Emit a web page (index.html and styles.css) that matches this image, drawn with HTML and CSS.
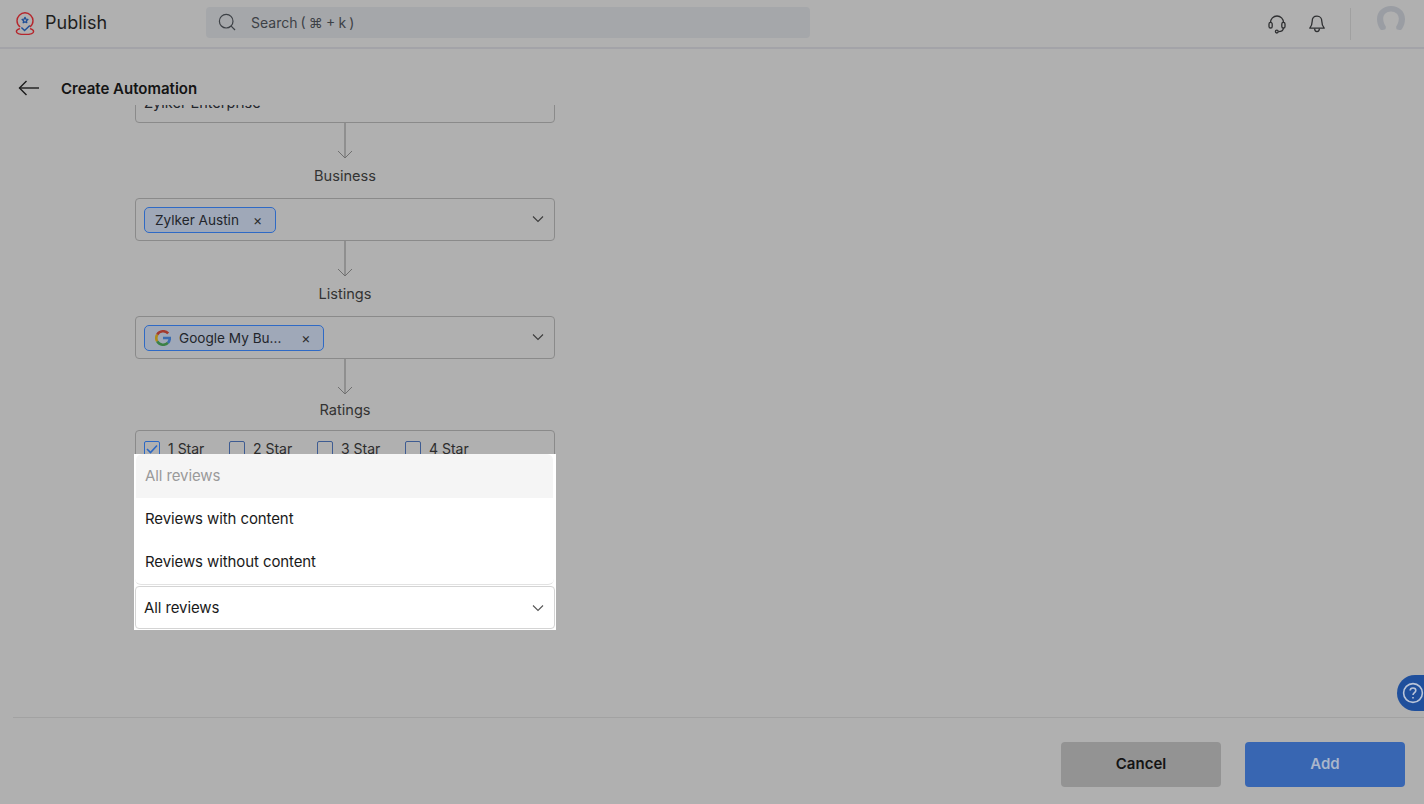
FILE: index.html
```html
<!DOCTYPE html>
<html lang="en">
<head>
  <meta charset="UTF-8">
  <meta name="viewport" content="width=device-width, initial-scale=1.0">
  <title>Create Automation</title>
  <link rel="stylesheet" href="styles.css">
</head>
<body>
  <div class="topbar">
    <div class="brand">
      <svg class="brand-logo" width="22" height="26" viewBox="0 0 22 26" fill="none">
        <path d="M6.2 17C4.2 15.6 3 13.4 3 10.8C3 6.4 6.6 2.8 11 2.8C15.4 2.8 19 6.4 19 10.8C19 13.4 17.8 15.6 15.8 17" stroke="#b5262c" stroke-width="1.4"/>
        <path d="M6 18.6C3.6 19.2 2.4 20.2 2.4 21.4C2.4 23.4 6.4 24.4 11 24.4C15.6 24.4 19.6 23.4 19.6 21.4C19.6 20.2 18.4 19.2 16 18.6" stroke="#b5262c" stroke-width="1.4"/>
        <path d="M11 7.4L11.9 9.2L13.9 9.4L12.4 10.8L12.8 12.7L11 11.8L9.2 12.7L9.6 10.8L8.1 9.4L10.1 9.2Z" stroke="#1f4f96" stroke-width="1.3" stroke-linejoin="round"/>
        <path d="M7.4 17.4L10.6 20.6L15.8 15.6" stroke="#1f4f96" stroke-width="1.4"/>
      </svg>
      <span class="brand-name">Publish</span>
    </div>
    <div class="search">
      <svg width="20" height="20" viewBox="0 0 20 20" fill="none" stroke="#3d4146" stroke-width="1.2">
        <circle cx="9.2" cy="9.2" r="6.8"/>
        <path d="M14.2 14.2L18 18"/>
      </svg>
      <span class="search-text">Search ( ⌘ + k )</span>
    </div>
    <div class="top-icons">
      <svg width="20" height="20" viewBox="0 0 20 20" fill="none" stroke="#2f3032" stroke-width="1.3">
        <path d="M3.5 9V8.5C3.5 4.9 6.4 2 10 2C13.6 2 16.5 4.9 16.5 8.5V9"/>
        <rect x="2" y="8.4" width="3.2" height="5.6" rx="1.6"/>
        <rect x="14.8" y="8.4" width="3.2" height="5.6" rx="1.6"/>
        <path d="M16.4 14C16.4 16.4 14.6 17.6 11.4 17.6"/>
        <circle cx="9.8" cy="17.6" r="1.4"/>
      </svg>
      <svg class="bell" width="20" height="20" viewBox="0 0 20 20" fill="none" stroke="#2f3032" stroke-width="1.3">
        <path d="M10 2.2C7 2.2 5.2 4.4 5.2 7.2C5.2 11 4.2 12.4 2.8 14.2H17.2C15.8 12.4 14.8 11 14.8 7.2C14.8 4.4 13 2.2 10 2.2Z" stroke-linejoin="round"/>
        <path d="M7.6 14.6C7.6 16.4 8.6 17.6 10 17.6C11.4 17.6 12.4 16.4 12.4 14.6"/>
      </svg>
      <div class="top-divider"></div>
      <svg class="avatar" width="30" height="30" viewBox="0 0 30 30" fill="#9a9da3">
        <path d="M15 1C7 1 1 6.5 1 14C1 18 2.3 21.6 4.4 24.4C5.4 25.2 7.6 25.2 9.4 24.2C9.8 23.2 10 22.2 9.8 21.4C8.2 19.4 7.2 16.6 7.2 13.8C7.2 9.6 10.4 6.6 15 6.6C19.6 6.6 22.8 9.6 22.8 13.8C22.8 16.6 21.8 19.4 20.2 21.4C20 22.2 20.2 23.2 20.6 24.2C22.4 25.2 24.6 25.2 25.6 24.4C27.7 21.6 29 18 29 14C29 6.5 23 1 15 1Z"/>
      </svg>
    </div>
  </div>

  <div class="page-head">
    <svg width="22" height="16" viewBox="0 0 22 16" fill="none" stroke="#1c1c1c" stroke-width="1.4">
      <path d="M1.5 8H21"/>
      <path d="M8.5 1L1.5 8L8.5 15"/>
    </svg>
    <span class="page-title">Create Automation</span>
  </div>

  <div class="main">
    <div class="flow">
      <div class="box box-first"><span class="box-text">Zylker Enterprise</span></div>

      <div class="connector connector-a">
        <svg width="16" height="36" viewBox="0 0 16 36" fill="none" stroke="#6f6f6f">
          <path d="M8 0V35"/>
          <path d="M1 28L8 35L15 28"/>
        </svg>
        <div class="step-label">Business</div>
      </div>
      <div class="box">
        <div class="chip">
          <span class="chip-text">Zylker Austin</span>
          <span class="chip-close">×</span>
        </div>
        <svg class="chevron" width="12" height="8" viewBox="0 0 12 8" fill="none" stroke="#3b3b3b" stroke-width="1.1"><path d="M1 1.5L6 6.5L11 1.5"/></svg>
      </div>

      <div class="connector connector-a">
        <svg width="16" height="36" viewBox="0 0 16 36" fill="none" stroke="#6f6f6f">
          <path d="M8 0V35"/>
          <path d="M1 28L8 35L15 28"/>
        </svg>
        <div class="step-label">Listings</div>
      </div>
      <div class="box">
        <div class="chip chip-google">
          <svg class="g-logo" width="16" height="16" viewBox="0 0 16 16" fill="none" stroke-width="2.6">
            <path d="M13.2 3.4A7 7 0 0 0 2.2 4.6" stroke="#a33a2e"/>
            <path d="M2.2 4.6A7 7 0 0 0 2.2 11.4" stroke="#b08a1a"/>
            <path d="M2.2 11.4A7 7 0 0 0 13 12.8" stroke="#3b8146"/>
            <path d="M13 12.8A7 7 0 0 0 14.8 8H8" stroke="#3b6cb0"/>
          </svg>
          <span class="chip-text">Google My Bu...</span>
          <span class="chip-close">×</span>
        </div>
        <svg class="chevron" width="12" height="8" viewBox="0 0 12 8" fill="none" stroke="#3b3b3b" stroke-width="1.1"><path d="M1 1.5L6 6.5L11 1.5"/></svg>
      </div>

      <div class="connector connector-b">
        <svg width="16" height="36" viewBox="0 0 16 36" fill="none" stroke="#6f6f6f">
          <path d="M8 0V35"/>
          <path d="M1 28L8 35L15 28"/>
        </svg>
        <div class="step-label">Ratings</div>
      </div>
      <div class="box box-ratings">
        <div class="rating"><span class="check checked"><svg width="12" height="10" viewBox="0 0 12 10" fill="none" stroke="#2c68c4" stroke-width="1.6"><path d="M1 5L4.5 8.5L11 1.5"/></svg></span>1 Star</div>
        <div class="rating"><span class="check"></span>2 Star</div>
        <div class="rating"><span class="check"></span>3 Star</div>
        <div class="rating"><span class="check"></span>4 Star</div>
      </div>

      <div class="dropdown">
        <div class="menu">
          <div class="menu-item menu-item-active">All reviews</div>
          <div class="menu-item">Reviews with content</div>
          <div class="menu-item">Reviews without content</div>
        </div>
        <div class="select">
          <span class="select-text">All reviews</span>
          <svg width="12" height="8" viewBox="0 0 12 8" fill="none" stroke="#555" stroke-width="1.1"><path d="M1 1.5L6 6.5L11 1.5"/></svg>
        </div>
      </div>
    </div>

    <div class="help">
      <svg width="22" height="22" viewBox="0 0 22 22" fill="none" stroke="#b9c4d8" stroke-width="1.6">
        <circle cx="11" cy="11" r="9.4"/>
        <path d="M8.2 8.6C8.2 7 9.4 6 11 6C12.6 6 13.8 7 13.8 8.5C13.8 10.6 11 10.6 11 13"/>
        <path d="M11 15V16.4"/>
      </svg>
    </div>
  </div>

  <div class="footer">
    <div class="btn btn-cancel">Cancel</div>
    <div class="btn btn-add">Add</div>
  </div>
</body>
</html>
```

FILE: styles.css
```css
html, body {
  margin: 0;
  height: 100%;
}

body {
  width: 1424px;
  height: 804px;
  overflow: hidden;
  display: flex;
  flex-direction: column;
  background-color: #b0b0b0;
  font-family: Inter, "Noto Sans", sans-serif;
  color: #2c2c2c;
}

.topbar {
  height: 47px;
  flex: none;
  display: flex;
  align-items: center;
  border-bottom: 2px solid #a3a3a8;
  box-sizing: content-box;
}

.brand {
  width: 206px;
  display: flex;
  align-items: center;
  padding-left: 14px;
  padding-bottom: 2px;
  box-sizing: border-box;
}

.brand-name {
  margin-left: 9px;
  font-size: 18px;
  color: #1e1e1e;
}

.search {
  width: 604px;
  height: 31px;
  margin-top: -3px;
  display: flex;
  align-items: center;
  padding-left: 11px;
  box-sizing: border-box;
  background-color: #a5a7aa;
  border-radius: 4px;
}

.search-text {
  margin-left: 14px;
  font-size: 14px;
  word-spacing: -0.8px;
  color: #3d4146;
}

.top-icons {
  margin-left: auto;
  display: flex;
  align-items: center;
}

.bell {
  margin-left: 20px;
}

.top-divider {
  width: 1px;
  height: 32px;
  margin-left: 23px;
  background-color: #a0a0a0;
}

.avatar {
  margin: -8px 18px 0 25px;
}

.page-head {
  height: 56px;
  flex: none;
  display: flex;
  align-items: center;
  padding-left: 18px;
  padding-top: 22px;
  box-sizing: border-box;
}

.page-title {
  margin-left: 21px;
  font-size: 15px;
  font-weight: 600;
  color: #141414;
}

.main {
  position: relative;
  flex: 1;
  min-height: 0;
}

.flow {
  height: 100%;
  width: 420px;
  margin-left: 135px;
  overflow: hidden;
}

.box {
  height: 43px;
  display: flex;
  align-items: center;
  padding: 0 8px;
  box-sizing: border-box;
  border: 1px solid #8a8a8a;
  border-radius: 4px;
}

.box-first {
  margin-top: -25px;
  align-items: flex-start;
  padding-top: 13px;
}

.box-text {
  font-size: 14.5px;
  line-height: 17px;
  color: #22252b;
}

.connector {
  display: flex;
  flex-direction: column;
  align-items: center;
}

.connector svg {
  display: block;
}

.connector-a {
  height: 75px;
}

.connector-b {
  height: 71px;
}

.step-label {
  margin-top: 8px;
  font-size: 14.6px;
  line-height: 18px;
  color: #333;
}

.connector-b .step-label {
  margin-top: 6px;
}

.chip {
  height: 26px;
  display: flex;
  align-items: center;
  padding: 0 13px 0 10px;
  box-sizing: border-box;
  background-color: #9fa8b8;
  border: 1px solid #2f6ac5;
  border-radius: 5px;
}

.chip-text {
  font-size: 13.6px;
  color: #22252b;
}

.chip-close {
  margin-left: 14px;
  font-size: 14px;
  line-height: 14px;
  color: #2b2b2b;
}

.chip-google {
  padding-right: 12px;
}

.chip-google .chip-close {
  margin-left: 20px;
}

.g-logo {
  margin-right: 8px;
}

.chevron {
  margin-left: auto;
  margin-right: 2px;
  margin-top: -1px;
}

.box-ratings {
  height: 80px;
  align-items: flex-start;
  padding-top: 10px;
}

.rating {
  width: 88px;
  display: flex;
  align-items: center;
  font-size: 14px;
  line-height: 16px;
  color: #2c2c2c;
}

.rating:first-child {
  width: 85px;
}

.check {
  width: 14px;
  height: 14px;
  margin-right: 8px;
  display: flex;
  align-items: center;
  justify-content: center;
  border: 1px solid #3e5c92;
  border-radius: 2px;
}

.check.checked {
  border-color: #2c68c4;
}

.dropdown {
  position: absolute;
  left: 134px;
  top: 349px;
  width: 422px;
  height: 176px;
  box-sizing: border-box;
  padding: 0 1px 1px;
  background-color: #fff;
  display: flex;
  flex-direction: column;
}

.menu {
  height: 131px;
  flex: none;
  margin: 0 1px 0 0;
  padding: 0 1px;
  box-sizing: border-box;
  border-radius: 6px;
  border-bottom: 1px solid #e2e2e2;
  overflow: hidden;
}

.menu-item {
  height: 43px;
  display: flex;
  align-items: center;
  padding: 0 0 2px 9px;
  box-sizing: border-box;
  font-size: 15px;
  letter-spacing: -0.1px;
  color: #1a1a1a;
}

.menu-item-active {
  height: 44px;
  background-color: #f5f5f5;
  color: #9a9a9a;
  border-radius: 6px 6px 0 0;
}

.select {
  height: 43px;
  flex: none;
  margin-top: 1px;
  display: flex;
  align-items: center;
  justify-content: space-between;
  padding: 0 10px 0 8px;
  box-sizing: border-box;
  border: 1px solid #d4d4d4;
  border-radius: 4px;
  font-size: 15px;
  letter-spacing: -0.1px;
  color: #1a1a1a;
}

.select-text {
  margin-top: -1px;
}

.help {
  position: absolute;
  right: 0;
  top: 570px;
  width: 27px;
  height: 36px;
  display: flex;
  align-items: center;
  padding-left: 5px;
  box-sizing: border-box;
  background-color: #1f4f9c;
  border-radius: 18px 0 0 18px;
  overflow: hidden;
}

.help svg {
  flex: none;
}

.footer {
  height: 87px;
  flex: none;
  margin-left: 13px;
  display: flex;
  justify-content: flex-end;
  gap: 24px;
  padding: 24px 19px 0 0;
  box-sizing: border-box;
  border-top: 1px solid #a2a2a2;
}

.btn {
  width: 160px;
  height: 45px;
  display: flex;
  align-items: center;
  justify-content: center;
  padding-bottom: 2px;
  box-sizing: border-box;
  font-size: 15px;
  font-weight: 600;
  border-radius: 4px;
}

.btn-cancel {
  background-color: #939393;
  color: #141414;
}

.btn-add {
  background-color: #3866b2;
  color: #aab6cb;
}
```
